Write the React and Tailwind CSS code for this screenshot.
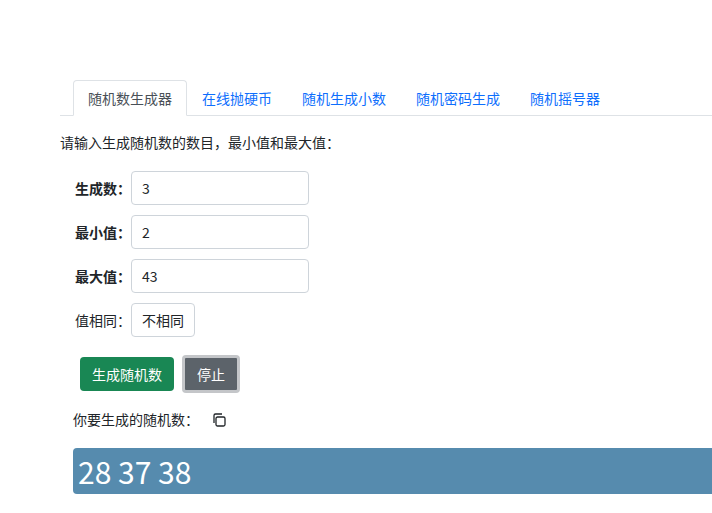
export default function App() {
  const tabs = ['随机数生成器', '在线抛硬币', '随机生成小数', '随机密码生成', '随机摇号器'];
  const rows = [['生成数：', '3'], ['最小值：', '2'], ['最大值：', '43']];
  return (
    <div className="min-h-screen bg-white text-[14px] text-[#212529]" style={{ fontFamily: '"Microsoft YaHei","Noto Sans CJK SC",sans-serif' }}>
      <div className="pt-[80px] pl-[60px]">
        <div className="flex pl-[13px] border-b border-[#dee2e6]">
          {tabs.map((t, i) => (
            <div key={t} className={`h-[36px] px-[14px] flex items-center -mb-px ${i === 0 ? 'border border-[#dee2e6] border-b-white bg-white rounded-t text-[#495057]' : 'text-[#0d6efd] border border-transparent'}`}>{t}</div>
          ))}
        </div>
        <p className="mt-[16px] leading-[20px]">请输入生成随机数的数目，最小值和最大值：</p>
        <div className="mt-[19px] pl-[15px] flex flex-col gap-[10px]">
          {rows.map(([l, v]) => (
            <div key={l} className="flex items-center">
              <span className="font-bold w-[56px]">{l}</span>
              <div className="w-[178px] h-[34px] border border-[#ced4da] rounded px-[10px] flex items-center">{v}</div>
            </div>
          ))}
          <div className="flex items-center">
            <span className="w-[56px]">值相同：</span>
            <div className="h-[34px] border border-[#ced4da] rounded px-[10px] flex items-center">不相同</div>
          </div>
        </div>
        <div className="mt-[18px] pl-[20px] flex items-center gap-[8px]">
          <button className="h-[34px] px-[12px] rounded bg-[#198754] text-white">生成随机数</button>
          <button className="h-[38px] px-[12px] rounded bg-[#5c636a] text-white border-[3px] border-[#c4c6c9]">停止</button>
        </div>
        <div className="mt-[16px] pl-[13px] flex items-center gap-[12px]">
          <span>你要生成的随机数：</span>
          <svg width="16" height="16" viewBox="0 0 16 16" fill="none" stroke="#212529" strokeWidth="1.3">
            <rect x="5" y="5" width="9" height="9" rx="1.5" />
            <path d="M3 11V3.5A1.5 1.5 0 0 1 4.5 2H11" />
          </svg>
        </div>
        <div className="mt-[18px] ml-[13px] h-[46px] bg-[#568bae] rounded-l text-white text-[30px] flex items-center px-[5px]">28 37 38</div>
      </div>
    </div>
  );
}
